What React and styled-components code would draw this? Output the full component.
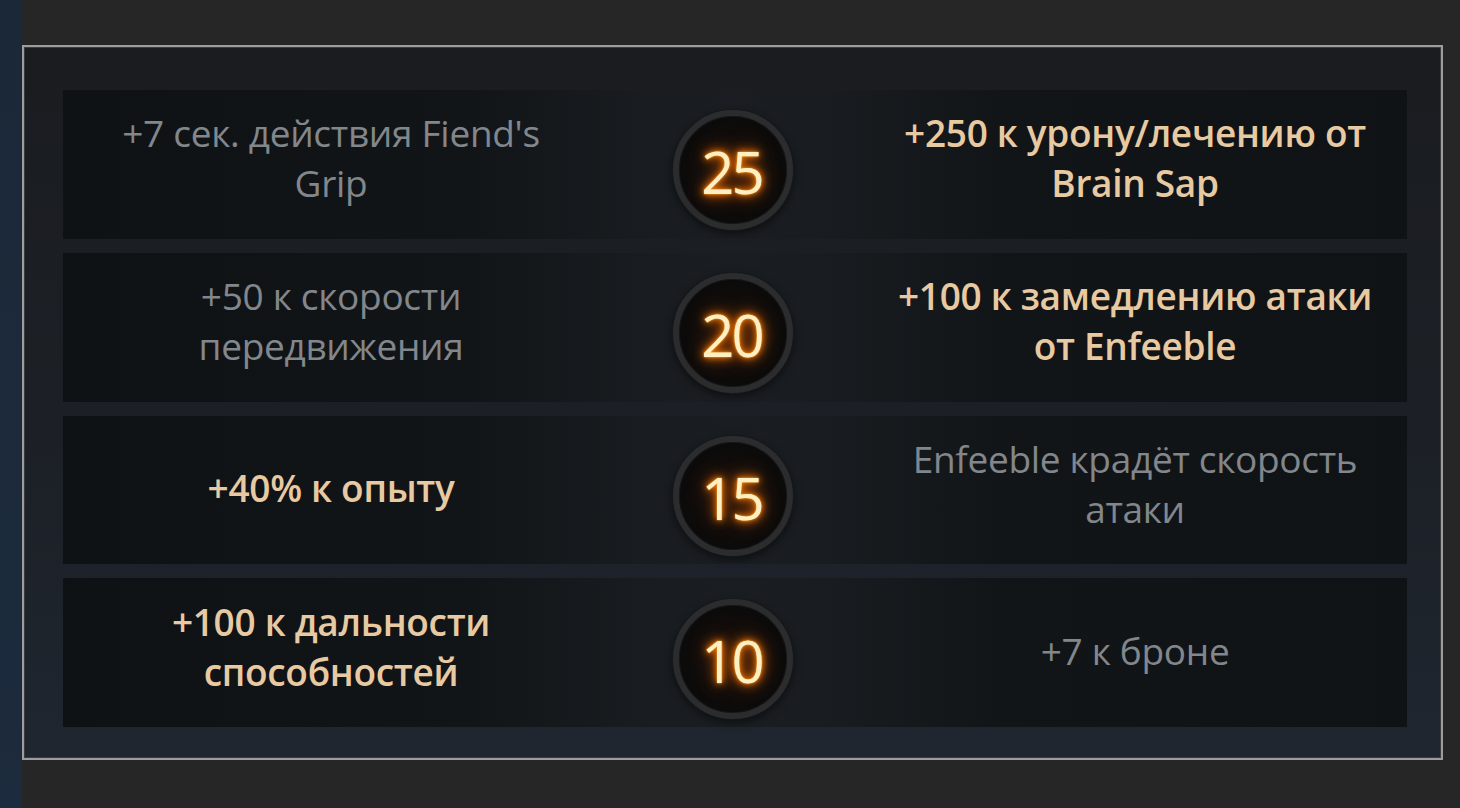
import React from "react";
import styled, { createGlobalStyle } from "styled-components";

const Global = createGlobalStyle`
  html, body { margin: 0; padding: 0; background: #262626; }
  body { width: 1460px; height: 808px; overflow: hidden; font-family: "Open Sans", "Noto Sans", sans-serif; }
`;

const Page = styled.div`
  display: flex;
  width: 1460px;
  height: 808px;
  background: #262626;
`;

const SideStrip = styled.div`
  width: 22px;
  flex: none;
  background: linear-gradient(180deg, #1b2838 0%, #1c2b3d 100%);
`;

const Main = styled.div`
  flex: none;
  padding-top: 45px;
`;

const Frame = styled.div`
  width: 1421px;
  height: 715px;
  box-sizing: border-box;
  border: 2px solid #9d9d9d;
  box-shadow: inset 0 0 0 1px #3a3c3f;
  background: linear-gradient(180deg, #1a1c20 0%, #1c2026 55%, #1f2630 100%);
  padding: 43px 34px 31px 39px;
  display: flex;
  flex-direction: column;
  gap: 14px;
`;

const Row = styled.div`
  height: 149px;
  display: grid;
  grid-template-columns: 536px 264px 1fr;
  align-items: center;
  background: linear-gradient(
    90deg,
    #0f1215 0%,
    #121518 30%,
    #191c20 44%,
    #1a1d21 50%,
    #191c20 56%,
    #121518 70%,
    #101316 100%
  );
`;

const Cell = styled.div`
  text-align: center;
  font-size: 37px;
  line-height: 50px;
  letter-spacing: -0.3px;
  color: ${(p) => (p.$active ? "#e8caa2" : "#82878c")};
  font-weight: ${(p) => (p.$active ? 600 : 400)};
  padding: 0 6px;
  margin-top: ${(p) => (p.$single ? "-4px" : "-12px")};
`;

const Line = styled.span`
  display: block;
  white-space: nowrap;
`;

const BadgeWrap = styled.div`
  display: flex;
  justify-content: center;
  align-items: center;
  padding-top: 12px;
  padding-left: 4px;
`;

const Badge = styled.div`
  width: 120px;
  height: 120px;
  box-sizing: border-box;
  border-radius: 50%;
  border: 6px solid #2b2c2d;
  box-shadow: 0 0 0 1px #17191b, 0 3px 8px rgba(0, 0, 0, 0.55), inset 0 0 0 1px #161616;
  background: radial-gradient(circle at 50% 50%, #1c140e 0%, #100d0b 45%, #0a0a0a 75%);
  display: flex;
  align-items: center;
  justify-content: center;
`;

const Level = styled.span`
  font-family: "Open Sans", "Noto Sans", sans-serif;
  font-size: 58px;
  font-weight: 400;
  letter-spacing: -3px;
  line-height: 1;
  color: #fff0c4;
  margin-top: 4px;
  margin-left: -3px;
  text-shadow: 0 0 2px #ffb040, 0 0 6px #ff8000, 0 0 12px #ff6a00, 0 0 20px rgba(200, 80, 0, 0.8);
`;

const rows = [
  {
    level: 25,
    left: { lines: ["+7 сек. действия Fiend's", "Grip"], active: false },
    right: { lines: ["+250 к урону/лечению от", "Brain Sap"], active: true },
  },
  {
    level: 20,
    left: { lines: ["+50 к скорости", "передвижения"], active: false },
    right: { lines: ["+100 к замедлению атаки", "от Enfeeble"], active: true },
  },
  {
    level: 15,
    left: { lines: ["+40% к опыту"], active: true },
    right: { lines: ["Enfeeble крадёт скорость", "атаки"], active: false },
  },
  {
    level: 10,
    left: { lines: ["+100 к дальности", "способностей"], active: true },
    right: { lines: ["+7 к броне"], active: false },
  },
];

function Talent({ data }) {
  return (
    <Cell $active={data.active} $single={data.lines.length === 1}>
      {data.lines.map((l) => (
        <Line key={l}>{l}</Line>
      ))}
    </Cell>
  );
}

export default function App() {
  return (
    <>
      <Global />
      <Page>
        <SideStrip />
        <Main>
          <Frame>
            {rows.map((r) => (
              <Row key={r.level}>
                <Talent data={r.left} />
                <BadgeWrap>
                  <Badge>
                    <Level>{r.level}</Level>
                  </Badge>
                </BadgeWrap>
                <Talent data={r.right} />
              </Row>
            ))}
          </Frame>
        </Main>
      </Page>
    </>
  );
}
